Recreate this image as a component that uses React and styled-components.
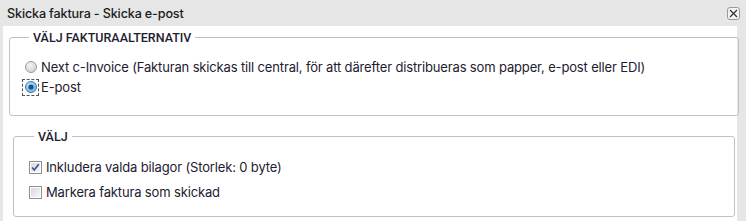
import React from "react";
import styled, { createGlobalStyle } from "styled-components";

const Global = createGlobalStyle`
  html, body { margin: 0; padding: 0; background: #e6e6e6; }
  body { font-family: Inter, "Open Sans", sans-serif; font-size: 13px; color: #1e2030; }
`;

const Dialog = styled.div`
  width: 746px;
  height: 221px;
  display: flex;
  flex-direction: column;
  background: #e6e6e6;
  overflow: hidden;
`;

const TitleBar = styled.div`
  height: 26px;
  flex: none;
  display: flex;
  align-items: center;
  justify-content: space-between;
  padding: 0 6px 0 7px;
  font-size: 12.6px;
  font-weight: 500;
  letter-spacing: -0.15px;
  color: #1b1b1b;
`;

const CloseButton = styled.button`
  width: 13px;
  height: 13px;
  padding: 0;
  border: 1px solid #9a9a9a;
  border-radius: 3px;
  background: #f4f4f4;
  display: flex;
  align-items: center;
  justify-content: center;
  margin-top: 1px;
`;

const Body = styled.div`
  flex: 1;
  background: #fff;
  margin: 0 9px 0 3px;
  padding: 4px 0 0 6px;
  display: flex;
  flex-direction: column;
  gap: 13px;
`;

const Fieldset = styled.fieldset`
  flex: none;
  margin: 0 ${(p) => p.$right}px 0 ${(p) => p.$left}px;
  border: 1px solid #b9c4c7;
  border-radius: 3px;
  padding: ${(p) => p.$top}px 0 0 ${(p) => p.$pad}px;
  height: ${(p) => p.$h}px;
  box-sizing: border-box;
  display: flex;
  flex-direction: column;
  gap: ${(p) => p.$gap}px;
`;

const Legend = styled.legend`
  padding: 0 4px;
  margin-left: 5px;
  font-family: Roboto, Inter, sans-serif;
  font-size: 12.5px;
  font-weight: 500;
  color: #1e2030;
  letter-spacing: 0;
`;

const Option = styled.label`
  display: flex;
  align-items: center;
  gap: 4px;
  height: 18px;
  font-size: 13px;
  letter-spacing: -0.15px;
  color: #1e2030;
`;

const RadioBox = styled.span`
  width: 13px;
  height: 13px;
  display: inline-flex;
  align-items: center;
  justify-content: center;
  box-sizing: border-box;
  outline: ${(p) => (p.$focus ? "1px dashed #555" : "none")};
  outline-offset: 1px;
`;

const Radio = ({ checked }) => (
  <RadioBox $focus={checked}>
    <svg width="12" height="12" viewBox="0 0 12 12">
      <defs>
        <radialGradient id="rg" cx="40%" cy="35%" r="70%">
          <stop offset="0%" stopColor="#f4f4f4" />
          <stop offset="100%" stopColor="#cfcfcf" />
        </radialGradient>
        <radialGradient id="rb" cx="40%" cy="35%" r="70%">
          <stop offset="0%" stopColor="#bfe3f8" />
          <stop offset="100%" stopColor="#6db3e0" />
        </radialGradient>
      </defs>
      <circle cx="6" cy="6" r="5.5" fill={checked ? "url(#rb)" : "url(#rg)"} stroke={checked ? "#3c7fb1" : "#9c9c9c"} strokeWidth="1" />
      {checked && <circle cx="6" cy="6" r="2.6" fill="#1f4f87" />}
    </svg>
  </RadioBox>
);

const Check = ({ checked }) => (
  <svg width="13" height="13" viewBox="0 0 13 13">
    <defs>
      <linearGradient id="cg" x1="0" y1="0" x2="1" y2="1">
        <stop offset="0%" stopColor="#d9d9d9" />
        <stop offset="100%" stopColor="#f6f6f6" />
      </linearGradient>
    </defs>
    <rect x="0.5" y="0.5" width="12" height="12" fill="#fff" stroke="#8f8f8f" />
    <rect x="2" y="2" width="9" height="9" fill="url(#cg)" />
    {checked && (
      <path d="M3.2 6.6 L5.2 9 L9.8 3.2" fill="none" stroke="#3d4f8c" strokeWidth="1.6" />
    )}
  </svg>
);

const OptionText = styled.span`
  white-space: nowrap;
`;

export default function App() {
  return (
    <>
      <Global />
      <Dialog>
        <TitleBar>
          <span>Skicka faktura - Skicka e-post</span>
          <CloseButton aria-label="Stäng">
            <svg width="9" height="9" viewBox="0 0 9 9">
              <path d="M1 1 L8 8 M8 1 L1 8" stroke="#333" strokeWidth="1.2" />
            </svg>
          </CloseButton>
        </TitleBar>
        <Body>
          <Fieldset $left={0} $right={-2} $pad={14} $top={13} $h={86} $gap={2}>
            <Legend>VÄLJ FAKTURAALTERNATIV</Legend>
            <Option>
              <Radio />
              <OptionText>
                Next c-Invoice (Fakturan skickas till central, för att därefter distribueras som papper, e-post eller EDI)
              </OptionText>
            </Option>
            <Option>
              <Radio checked />
              <OptionText>E-post</OptionText>
            </Option>
          </Fieldset>
          <Fieldset $left={4} $right={2} $pad={15} $top={14} $h={88} $gap={7}>
            <Legend>VÄLJ</Legend>
            <Option>
              <Check checked />
              <OptionText>Inkludera valda bilagor (Storlek: 0 byte)</OptionText>
            </Option>
            <Option>
              <Check />
              <OptionText>Markera faktura som skickad</OptionText>
            </Option>
          </Fieldset>
        </Body>
      </Dialog>
    </>
  );
}
